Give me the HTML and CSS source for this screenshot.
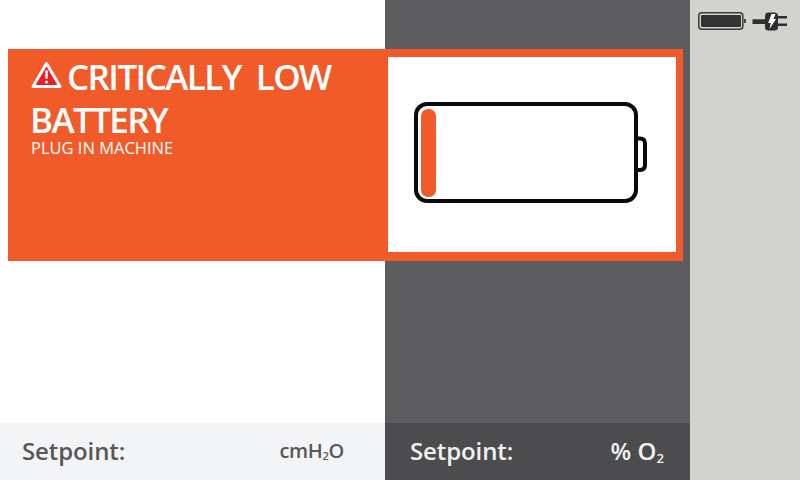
FILE: index.html
```html
<!DOCTYPE html>
<html>

<head>
	<title>Critically low battery</title>
	<link rel="stylesheet" href="styles.css">
</head>

<body>

	<div class="screen">

		<div class="col col-left">
			<div class="spacer"></div>
			<div class="setpoint setpoint-light">
				<span class="label">Setpoint:</span>
				<span class="unit unit-left">cmH<sub>2</sub>O</span>
			</div>
		</div>

		<div class="col col-mid">
			<div class="spacer"></div>
			<div class="setpoint setpoint-dark">
				<span class="label">Setpoint:</span>
				<span class="unit unit-mid">% O<sub>2</sub></span>
			</div>
		</div>

		<div class="col col-right">
			<div class="status">
				<svg class="status-batt" width="48" height="18" viewBox="0 0 48 18">
					<rect x="0.8" y="0.8" width="44" height="16.400" rx="3" fill="none" stroke="#3a3a3a" stroke-width="1.500"/>
					<rect x="3" y="3" width="40" height="12" rx="1" fill="#333"/>
					<rect x="46" y="7" width="2" height="4" fill="#444"/>
				</svg>
				<svg class="status-plug" width="36" height="20" viewBox="0 0 36 20">
					<rect x="0.5" y="8.300" width="13" height="4.700" fill="#2f2f2f"/>
					<rect x="13" y="1.500" width="13" height="18" rx="3.500" fill="#2f2f2f"/>
					<rect x="26" y="5" width="9" height="2.500" fill="#2f2f2f"/>
					<rect x="26" y="12.500" width="9" height="2.500" fill="#2f2f2f"/>
					<path d="M19.500 3 L23.500 3 L21.500 8 L24 8 L17.500 18 L18.800 12 L16.200 12 Z" fill="#fff"/>
				</svg>
			</div>
		</div>

		<!-- alert lies over the columns -->
		<div class="alert">
			<div class="alert-text">
				<h1 class="alert-title">
					<svg class="warn" width="31" height="28" viewBox="0 0 31 28">
						<path d="M15.500 2.500 L29 25.500 L2 25.500 Z" fill="#ed1c24" stroke="#fff" stroke-width="3" stroke-linejoin="round"/>
						<rect x="14.300" y="9" width="2.400" height="9" rx="1.200" fill="#fff"/>
						<circle cx="15.500" cy="21" r="1.500" fill="#fff"/>
					</svg>CRITICALLY&nbsp; LOW<br><span class="title-line">BATTERY</span>
				</h1>
				<p class="alert-sub">PLUG IN MACHINE</p>
			</div>
			<div class="alert-panel">
				<svg width="236" height="104" viewBox="0 0 236 104">
					<rect x="2" y="2" width="220" height="97" rx="11" fill="none" stroke="#0a0a0a" stroke-width="4"/>
					<rect x="7" y="7" width="15" height="88" rx="7" fill="#f15a29"/>
					<path d="M223 36.500 H226 Q231 36.500 231 41.500 V63 Q231 68 226 68 H223" fill="none" stroke="#0a0a0a" stroke-width="4"/>
				</svg>
			</div>
		</div>

	</div>

</body>

</html>
```

FILE: styles.css
```css
* {
	box-sizing: border-box;
}

body {
	margin: 0;
	font-family: "Open Sans", "Liberation Sans", sans-serif;
}

.screen {
	position: relative;
	display: flex;
	width: 800px;
	height: 480px;
	overflow: hidden;
}

.col {
	display: flex;
	flex-direction: column;
}

.col-left {
	width: 385px;
	background: #fff;
}

.col-mid {
	width: 305px;
	background: #5d5d5f;
}

.col-right {
	width: 110px;
	background: #d2d2ce;
}

.spacer {
	flex: 1;
}

/* bottom bars */
.setpoint {
	display: flex;
	align-items: center;
	justify-content: space-between;
	height: 57px;
	padding-bottom: 2px;
	font-size: 24px;
	font-weight: 600;
}

.setpoint-light {
	padding-left: 22px;
	padding-right: 41px;
	background: #f3f4f6;
	color: #58585a;
}

.setpoint-dark {
	padding-left: 25px;
	padding-right: 26px;
	background: #4c4c4e;
	color: #f1f1f1;
}

.label {
	letter-spacing: -0.1px;
}

.unit-left {
	font-size: 20px;
	letter-spacing: -0.3px;
}

.unit sub {
	font-size: 55%;
	line-height: 0;
	vertical-align: -0.2em;
}

/* top right icons */
.status {
	display: flex;
	align-items: center;
	gap: 6px;
	padding: 11px 0 0 8px;
}

/* alert */
.alert {
	position: absolute;
	top: 49px;
	left: 8px;
	display: flex;
	width: 675px;
	height: 212px;
	background: #f15a29;
}

.alert-text {
	width: 380px;
	padding: 6px 0 0 23px;
	color: #fff;
}

.alert-title {
	margin: 0;
	font-size: 35px;
	font-weight: 600;
	line-height: 43px;
	letter-spacing: -1.6px;
}

.title-line {
	margin-left: -1px;
}

.warn {
	margin: 0 5px 1px 0;
	vertical-align: baseline;
}

.alert-sub {
	margin: 0;
	font-size: 16.500px;
	line-height: 14px;
}

.alert-panel {
	flex: 1;
	margin: 8px 7px 9px 0;
	padding: 45px 0 0 26px;
	background: #fff;
}
```
